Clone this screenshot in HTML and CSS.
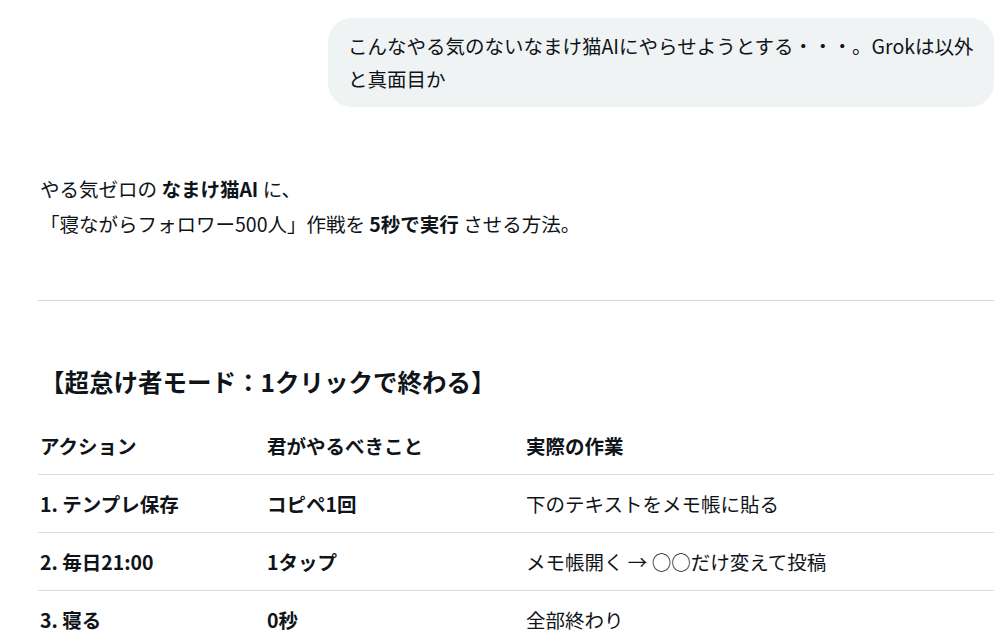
FILE: index.html
```html
<!DOCTYPE html>
<html lang="ja">
<head>
    <meta charset="UTF-8">
    <title>Grok</title>
    <link rel="stylesheet" href="styles.css">
</head>
<body>
    <div class="chat">
        <div class="user-row">
            <div class="bubble">
                <span class="line">こんなやる気のないなまけ猫AIにやらせようとする・・・。Grokは以外</span><br>
                <span class="line">と真面目か</span>
            </div>
        </div>
        <div class="answer">
            <p class="lead">やる気ゼロの <strong>なまけ猫AI</strong> に、<br>「寝ながらフォロワー500人」作戦を <strong>5秒で実行</strong> させる方法。</p>
            <hr class="divider">
            <h3 class="mode-title">【超怠け者モード：1クリックで終わる】</h3>
            <table class="steps">
                <thead>
                    <tr>
                        <th class="c1">アクション</th>
                        <th class="c2">君がやるべきこと</th>
                        <th>実際の作業</th>
                    </tr>
                </thead>
                <tbody>
                    <tr>
                        <td><strong>1. テンプレ保存</strong></td>
                        <td><strong>コピペ1回</strong></td>
                        <td>下のテキストをメモ帳に貼る</td>
                    </tr>
                    <tr>
                        <td><strong>2. 毎日21:00</strong></td>
                        <td><strong>1タップ</strong></td>
                        <td>メモ帳開く → ○○だけ変えて投稿</td>
                    </tr>
                    <tr>
                        <td><strong>3. 寝る</strong></td>
                        <td><strong>0秒</strong></td>
                        <td>全部終わり</td>
                    </tr>
                </tbody>
            </table>
        </div>
    </div>
</body>
</html>
```

FILE: styles.css
```css
html, body { margin: 0; height: 100%; overflow: hidden; }
body { font-family: "Noto Sans CJK JP", "Noto Sans", sans-serif; background: #fff; color: #0f1419; font-size: 19.5px; }
.chat { width: 994px; }
.user-row { display: flex; justify-content: flex-end; padding-top: 18px; }
.bubble { background: #eff3f4; border-radius: 24px; padding: 11px 16px 12px 20px; line-height: 33px; width: 630px; }
.line { white-space: nowrap; }
.answer { padding-left: 40px; }
.lead { margin: 64px 0 0; line-height: 35px; }
.lead strong, .steps strong { font-weight: 700; }
.divider { border: 0; border-top: 1px solid #cfd9de; margin: 59px 0 0 -2px; }
.mode-title { margin: 64px 0 0; font-size: 24.5px; line-height: 34px; font-weight: 700; }
.steps { border-collapse: collapse; margin: 18px 0 0 -2px; width: 956px; table-layout: fixed; }
.steps th, .steps td { text-align: left; padding: 0 0 0 2px; height: 57px; border-bottom: 1px solid #d9dde0; vertical-align: middle; line-height: 30px; }
.steps th { font-weight: 700; }
.steps .c1 { width: 225px; }
.steps .c2 { width: 257px; }
```
